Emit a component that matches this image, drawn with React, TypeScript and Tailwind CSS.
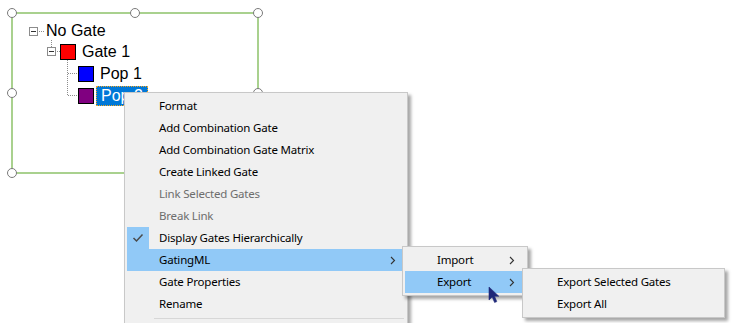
import React from 'react';

const MENU_FONT = { fontFamily: '"Noto Sans", "Segoe UI", sans-serif' };

// small chevron used for submenu items
const Chevron = () => (
  <svg width="6" height="9" viewBox="0 0 6 9" className="shrink-0">
    <path d="M1 1 L4.5 4.5 L1 8" fill="none" stroke="#333" strokeWidth="1.1" />
  </svg>
);

const Handle = ({ className }: { className: string }) => (
  <div className={`absolute w-[10px] h-[10px] rounded-full border-[1.5px] border-[#7a7a7a] bg-white ${className}`} />
);

type Item = { label: string; disabled?: boolean; checked?: boolean; active?: boolean; sub?: boolean };

const mainItems: Item[] = [
  { label: 'Format' },
  { label: 'Add Combination Gate' },
  { label: 'Add Combination Gate Matrix' },
  { label: 'Create Linked Gate' },
  { label: 'Link Selected Gates', disabled: true },
  { label: 'Break Link', disabled: true },
  { label: 'Display Gates Hierarchically', checked: true },
  { label: 'GatingML', active: true, sub: true },
  { label: 'Gate Properties' },
  { label: 'Rename' },
];

const MenuRow = ({ item, arrowClass = 'pr-[9px]' }: { item: Item; arrowClass?: string }) => (
  <div className={`relative flex items-center h-[22px] ${item.active ? 'bg-[#91c9f7]' : ''}`}>
    <div className={`w-[22px] h-[22px] flex items-center justify-center ${item.checked ? 'bg-[#91c9f7]' : ''}`}>
      {item.checked && (
        <svg width="12" height="10" viewBox="0 0 12 10">
          <path d="M1.5 5 L4.5 8 L10.5 1.5" fill="none" stroke="#4a4a4a" strokeWidth="1.5" />
        </svg>
      )}
    </div>
    <span className={`pl-[10px] text-[11.5px] tracking-[-0.2px] leading-none whitespace-nowrap ${item.disabled ? 'text-[#6d6d6d]' : 'text-black'}`}>
      {item.label}
    </span>
    {item.sub && <div className={`ml-auto flex items-center ${arrowClass}`}><Chevron /></div>}
  </div>
);

export default function App() {
  return (
    <div className="relative w-[748px] h-[323px] bg-white overflow-hidden">
      {/* gate rectangle on the canvas */}
      <div className="absolute left-[11px] top-[12px] w-[248px] h-[162px] border-2 border-[#a9d18e]" />
      <Handle className="left-[7px] top-[8px]" />
      <Handle className="left-[130px] top-[8px]" />
      <Handle className="left-[253px] top-[8px]" />
      <Handle className="left-[7px] top-[88px]" />
      <Handle className="left-[253px] top-[88px]" />
      <Handle className="left-[7px] top-[168px]" />
      <Handle className="left-[130px] top-[168px]" />

      {/* tree connectors */}
      <svg className="absolute left-0 top-0" width="120" height="110">
        <rect x="29.5" y="27.5" width="8" height="8" fill="white" stroke="#8c8c8c" />
        <line x1="31" y1="31.5" x2="36" y2="31.5" stroke="#333" />
        <line x1="39" y1="31.5" x2="45" y2="31.5" stroke="#8c8c8c" strokeDasharray="1 1" />
        <line x1="51.5" y1="40" x2="51.5" y2="47" stroke="#8c8c8c" strokeDasharray="1 1" />
        <rect x="47.5" y="47.5" width="8" height="8" fill="white" stroke="#8c8c8c" />
        <line x1="49" y1="51.5" x2="54" y2="51.5" stroke="#333" />
        <line x1="57" y1="51.5" x2="60" y2="51.5" stroke="#8c8c8c" strokeDasharray="1 1" />
        <line x1="67.5" y1="60" x2="67.5" y2="96" stroke="#8c8c8c" strokeDasharray="1 1" />
        <line x1="68" y1="73.5" x2="78" y2="73.5" stroke="#8c8c8c" strokeDasharray="1 1" />
        <line x1="68" y1="95.5" x2="78" y2="95.5" stroke="#8c8c8c" strokeDasharray="1 1" />
      </svg>

      {/* tree */}
      <div className="absolute left-[46px] top-[21px] flex flex-col text-[16px] leading-none text-black" style={{ fontFamily: '"Liberation Sans", Arial, sans-serif' }}>
        <div className="h-[20px] flex items-center">No Gate</div>
        <div className="h-[22px] flex items-center pl-[14px] gap-[6px]">
          <div className="w-[16px] h-[16px] bg-[#ff0000] border border-black" />
          <span>Gate 1</span>
        </div>
        <div className="h-[22px] flex items-center pl-[32px] gap-[6px]">
          <div className="w-[16px] h-[16px] bg-[#0000ff] border border-black" />
          <span>Pop 1</span>
        </div>
        <div className="h-[22px] flex items-center pl-[32px] gap-[2px]">
          <div className="w-[16px] h-[16px] bg-[#800080] border border-black" />
          <span className="h-[20px] px-[4px] flex items-center bg-[#0078d7] text-white border border-dotted border-[#f5a623]">Pop 2</span>
        </div>
      </div>

      {/* context menu */}
      <div className="absolute left-[124px] top-[92px] w-[284px] h-[240px] bg-[#f0f0f0] border border-[#c8c8c8] shadow-[3px_3px_3px_rgba(0,0,0,0.35)] p-[2px]" style={MENU_FONT}>
        {mainItems.map((it) => (
          <MenuRow key={it.label} item={it} />
        ))}
        <div className="ml-[27px] mr-[1px] my-[3px] h-px bg-[#d7d7d7]" />
      </div>

      {/* GatingML submenu */}
      <div className="absolute left-[402px] top-[246px] w-[126px] bg-[#f0f0f0] border border-[#c8c8c8] shadow-[3px_3px_3px_rgba(0,0,0,0.35)] p-[2px]" style={MENU_FONT}>
        <MenuRow item={{ label: 'Import', sub: true }} arrowClass="pr-[10px]" />
        <MenuRow item={{ label: 'Export', sub: true, active: true }} arrowClass="pr-[10px]" />
      </div>

      {/* Export submenu */}
      <div className="absolute left-[522px] top-[268px] w-[203px] bg-[#f0f0f0] border border-[#c8c8c8] shadow-[3px_3px_3px_rgba(0,0,0,0.35)] p-[2px]" style={MENU_FONT}>
        <MenuRow item={{ label: 'Export Selected Gates' }} />
        <MenuRow item={{ label: 'Export All' }} />
      </div>

      {/* mouse cursor */}
      <svg className="absolute left-[488px] top-[286px]" width="14" height="18" viewBox="0 0 14 18">
        <path d="M1 1 L1 14 L4.2 11 L6.6 16.5 L8.8 15.6 L6.5 10.2 L10.8 10.2 Z" fill="#1f2878" stroke="#1f2878" strokeWidth="0.6" strokeLinejoin="round" />
      </svg>
    </div>
  );
}
